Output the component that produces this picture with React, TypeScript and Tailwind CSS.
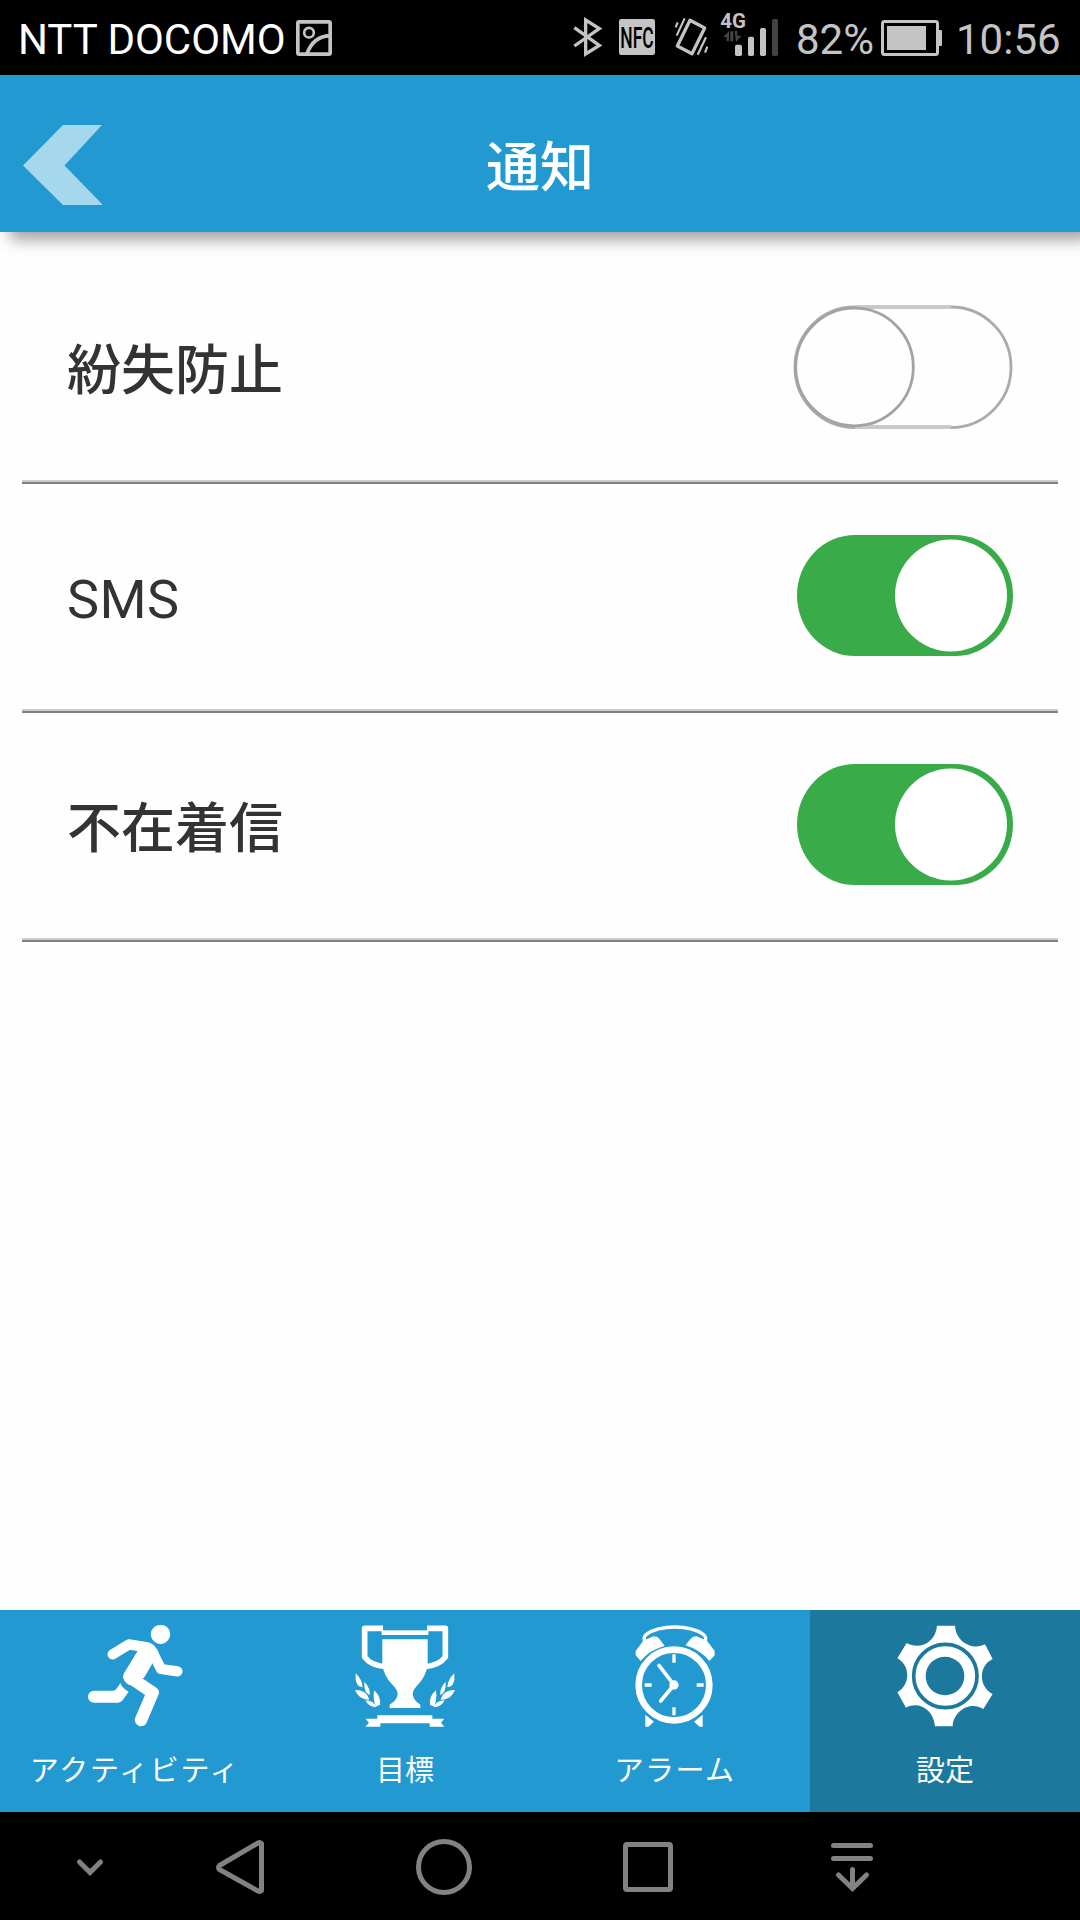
import React, { useState } from 'react';

interface ToggleProps {
  on: boolean;
  onToggle: () => void;
}

const Toggle: React.FC<ToggleProps> = ({ on, onToggle }) => (
  <button onClick={onToggle} role="switch" aria-checked={on}>
    {on ? (
      <svg width="220" height="126" viewBox="0 0 220 126">
        <rect x="4" y="1" width="216" height="121" rx="58" ry="60.5" fill="#3aab49" />
        <circle cx="158" cy="61.5" r="56" fill="#fff" />
      </svg>
    ) : (
      <svg width="220" height="126" viewBox="0 0 220 126" fill="none" stroke="#a3a3a3" strokeWidth="2.8">
        <rect x="2" y="2" width="216" height="120.5" rx="60" stroke="#ababab" />
        <path d="M62 2H158M62 122H158" stroke="#c9c9c9" strokeWidth="4" />
        <circle cx="61.5" cy="62" r="58.8" />
      </svg>
    )}
  </button>
);

const PhotoIcon = () => (
  <svg width="36" height="36" viewBox="888 57 108 108" fill="none" stroke="#c4c4c4">
    <rect x="893.5" y="62.5" width="97" height="97" rx="4" strokeWidth="11" />
    <circle cx="927" cy="95" r="14.5" strokeWidth="8" />
    <path d="M921 158Q940 106 990 104" strokeWidth="11" />
  </svg>
);

const SystemIcons = () => (
  <svg width="212" height="50" viewBox="30 30 636 150" fill="none" stroke="#c4c4c4">
    {/* Bluetooth */}
    <path d="M43 83L118 136L77 162V60L118 86L43 138" strokeWidth="10" />
    {/* NFC */}
    <rect x="177" y="57" width="108" height="108" rx="7" fill="#c4c4c4" stroke="none" />
    <text x="181" y="144" fontSize="90" textLength="100" lengthAdjust="spacingAndGlyphs" fill="#000" stroke="none" className="font-['Roboto',sans-serif] font-medium">NFC</text>
    {/* Vibrate */}
    <path d="M390 61L434 84L396 161L352 138Z" strokeWidth="10" strokeLinejoin="round" />
    <path d="M347 82L353 67M350 107L374 55M413 164L438 112M435 158L442 140" strokeWidth="6.5" />
    {/* Signal */}
    <text x="481" y="83" fontSize="61" textLength="77" lengthAdjust="spacingAndGlyphs" fill="#c4c4c4" stroke="none" className="font-['Roboto',sans-serif] font-bold">4G</text>
    <path d="M490 111L507 93V124H500V111ZM511 94H520V124H511ZM524 93H532V107H545L528 126Z" fill="#444" stroke="none" />
    <g stroke="none" fill="#c4c4c4">
      <rect x="525" y="134" width="21" height="34" rx="5" />
      <rect x="564" y="110" width="18" height="58" rx="5" />
      <rect x="600" y="84" width="18" height="84" rx="5" />
      <rect x="636" y="57" width="18" height="111" rx="5" fill="#444" />
    </g>
  </svg>
);

const BatteryIcon = () => (
  <svg width="62" height="36" viewBox="0 0 62 36">
    <rect x="1.5" y="1.5" width="55" height="33" rx="2" fill="none" stroke="#c4c4c4" strokeWidth="3" />
    <rect x="6" y="6" width="39" height="24" fill="#c4c4c4" />
    <path d="M58 10H60Q61 10 61 11V25Q61 26 60 26H58Z" fill="#c4c4c4" />
  </svg>
);

const RunnerIcon = () => (
  <svg width="120" height="110" viewBox="45 45 360 330" fill="none" stroke="#fff" strokeWidth="33" strokeLinecap="round" strokeLinejoin="round">
    <path d="M275 76Q283 60 302 60Q321 60 328 76A29 29 0 1 1 275 76Z" fill="#fff" stroke="none" />
    <path d="M158 148L207 118L262 127Q276 132 282 150L303 192L352 199" strokeWidth="31" />
    <path d="M235 134L192 205Q186 228 207 240L252 218L278 174L290 140Z" fill="#fff" stroke="none" />
    <path d="M208 216L278 263L243 345" strokeWidth="37" />
    <path d="M102 275H172" strokeWidth="36" />
    <path d="M181 234Q187 250 206 260L190 283Q183 293 170 293L160 258Q168 257 181 234Z" fill="#fff" stroke="none" />
  </svg>
);

const TrophyIcon = () => (
  <svg width="120" height="110" viewBox="45 45 360 330" fill="#fff">
    <path d="M159 70H104V156Q122 182 170 186M291 70H346V156Q328 182 280 186" fill="none" stroke="#fff" strokeWidth="17" strokeLinejoin="round" />
    <rect x="155" y="76" width="140" height="14" />
    <path d="M157 103H293V180Q288 213 265 238Q248 255 248 268Q250 287 271 299V309H179V299Q201 287 203 268Q203 255 186 238Q162 213 157 180Z" />
    <path d="M142 331H307V341H343L333 353L343 365H299V355H151V365H106L117 353L106 341H142Z" />
    <g id="laurel">
      <path d="M77 205Q97 225 98 246Q82 248 77 225Z" />
      <path d="M75 255Q112 255 118 284Q88 286 75 255Z" />
      <path d="M103 230Q122 250 119 271Q101 262 103 230Z" />
      <path d="M106 286Q130 286 140 306Q118 309 106 286Z" />
      <path d="M132 256Q154 275 150 300L138 304Q128 285 132 256Z" />
    </g>
    <use href="#laurel" transform="translate(450 0) scale(-1 1)" />
  </svg>
);

const ClockIcon = () => (
  <svg width="120" height="110" viewBox="45 45 360 330" fill="none" stroke="#fff">
    <circle cx="222" cy="240" r="106" strokeWidth="20" />
    <path d="M222 148V173M222 307V331M134 240H155M290 240H311" strokeWidth="10" />
    <path d="M177 181L222 240L182 288" strokeWidth="11" strokeLinecap="round" />
    <circle cx="222" cy="240" r="14" fill="#fff" stroke="none" />
    <path d="M138 114Q126 98 139 88Q170 66 225 66Q278 66 310 88Q324 98 311 114" strokeWidth="10" />
    <g fill="#fff" stroke="none">
      <path d="M107 151V138L130 107L160 94Q172 94 178 101L194 123Q150 134 122 168Z" />
      <path d="M344 151V138L321 107L290 94Q278 94 272 101L256 121Q300 134 328 168Z" />
      <path d="M136 329L162 350L145 365H136Z" />
      <path d="M308 329L282 350L299 365H308Z" />
    </g>
  </svg>
);

const GearIcon = () => (
  <svg width="120" height="110" viewBox="255 45 360 330" fill="#fff">
    <path d="M411 62H465C468 112 518 137 555 118L578 162C535 182 535 245 578 267L550 312C508 286 460 320 458 364H405C400 312 356 288 318 308L292 262C332 240 332 182 292 160L320 114C360 137 408 110 411 62Z" />
    <circle cx="436" cy="213" r="95" fill="none" stroke="#1c789c" strokeWidth="11" />
    <circle cx="435" cy="213" r="58" fill="#1c789c" />
  </svg>
);

const SETTINGS = [
  { label: '紛失防止', on: false, labelClass: "font-['Noto_Sans_CJK_JP',sans-serif] font-medium pb-px" },
  { label: 'SMS', on: true, labelClass: 'pt-[7px] tracking-[0.4px]' },
  { label: '不在着信', on: true, labelClass: "font-['Noto_Sans_CJK_JP',sans-serif] font-medium pb-px" },
];

const TABS = [
  { label: 'アクティビティ', icon: <RunnerIcon />, labelClass: 'tracking-[1.75px]' },
  { label: '目標', icon: <TrophyIcon />, labelClass: '' },
  { label: 'アラーム', icon: <ClockIcon />, labelClass: 'tracking-[1.5px]' },
  { label: '設定', icon: <GearIcon />, labelClass: '' },
];

const App: React.FC = () => {
  const [settings, setSettings] = useState(SETTINGS);
  const [activeTab, setActiveTab] = useState(3);

  const toggle = (idx: number) => {
    setSettings(settings.map((s, i) => (i === idx ? { ...s, on: !s.on } : s)));
  };

  return (
    <div className="w-[1080px] h-[1920px] flex flex-col overflow-hidden bg-[#fefefe] font-['Roboto','Noto_Sans_CJK_JP',sans-serif]">
      {/* Status bar */}
      <div className="h-[75px] shrink-0 bg-black flex items-center pl-[18px] pr-[18px] text-[42px] leading-none text-[#c4c4c4] whitespace-nowrap">
        <span className="w-[278px] pt-1 text-white">NTT DOCOMO</span>
        <PhotoIcon />
        <div className="ml-auto flex items-center">
          <div className="pb-[5px]">
            <SystemIcons />
          </div>
          <span className="w-[85px] ml-[14px] pt-1">82%</span>
          <BatteryIcon />
          <span className="w-[106px] ml-[13px] pt-1">10:56</span>
        </div>
      </div>

      {/* Header */}
      <header className="relative h-[157px] shrink-0 bg-[#2299d0] shadow-[10px_8px_14px_rgba(0,0,0,0.36)] grid grid-cols-[1fr_auto_1fr] items-center px-[23px] pt-[22px]">
        <button>
          <svg width="79" height="80" viewBox="0 0 79 80">
            <path d="M0 40.5L40 0H79L41.5 40.5L79 79V80H40Z" fill="#a6d8ed" />
          </svg>
        </button>
        <h1 className="pt-2 text-[54px] leading-none font-medium text-white">通知</h1>
      </header>

      {/* Settings */}
      <main className="flex-1 px-[22px] pt-[23px]">
        {settings.map((s, idx) => (
          <div key={s.label}>
            <div className="h-[225px] flex items-center justify-between px-[45px]">
              <span className={`text-[54px] leading-none text-[#333] ${s.labelClass}`}>{s.label}</span>
              <Toggle on={s.on} onToggle={() => toggle(idx)} />
            </div>
            <div className="h-[4px] bg-[#808080] border-t-2 border-[#cccccc]" />
          </div>
        ))}
      </main>

      {/* Tab bar */}
      <nav className="h-[202px] shrink-0 grid grid-cols-4 text-white">
        {TABS.map((tab, idx) => (
          <button
            key={tab.label}
            onClick={() => setActiveTab(idx)}
            className={`flex flex-col items-center pt-[10px] ${idx === activeTab ? 'bg-[#1c789c]' : 'bg-[#2299d0]'}`}
          >
            {tab.icon}
            <span className={`mt-[27px] text-[29px] leading-none ${tab.labelClass}`}>{tab.label}</span>
          </button>
        ))}
      </nav>

      {/* Navigation bar */}
      <div className="h-[108px] shrink-0 bg-black flex items-center pl-[60px]">
        <svg className="mr-[90px]" width="60" height="60" viewBox="0 0 60 60" fill="none" stroke="#828282" strokeWidth="5" strokeLinecap="round">
          <path d="M19.5 26L30 36.5L40.5 26" />
          <path d="M26 33.5L30 38L34 33.5Z" fill="#828282" strokeWidth="1" />
        </svg>
        <svg className="mr-[144px]" width="60" height="60" viewBox="0 0 60 60" fill="none" stroke="#828282" strokeWidth="5" strokeLinejoin="round">
          <path d="M51.5 7.5V54.5Q50 56 48 55L9.5 33.5Q7.5 31.5 9.5 29.5L48 7Q50 6 51.5 7.5Z" />
        </svg>
        <svg className="mr-[144px]" width="60" height="60" viewBox="0 0 60 60">
          <circle cx="30" cy="31" r="25.5" fill="none" stroke="#828282" strokeWidth="5" />
        </svg>
        <svg className="mr-[144px]" width="60" height="60" viewBox="0 0 60 60">
          <rect x="7.5" y="8.5" width="45" height="45" rx="1.5" fill="none" stroke="#828282" strokeWidth="5" />
        </svg>
        <svg width="60" height="60" viewBox="0 0 60 60" fill="none" stroke="#828282" strokeWidth="5" strokeLinecap="round">
          <path d="M11.5 9.5H48.5M11.5 22.5H48.5M30.5 33.5V52M16.5 39L30.5 52.5L44.5 39" />
        </svg>
      </div>
    </div>
  );
};

export default App;
